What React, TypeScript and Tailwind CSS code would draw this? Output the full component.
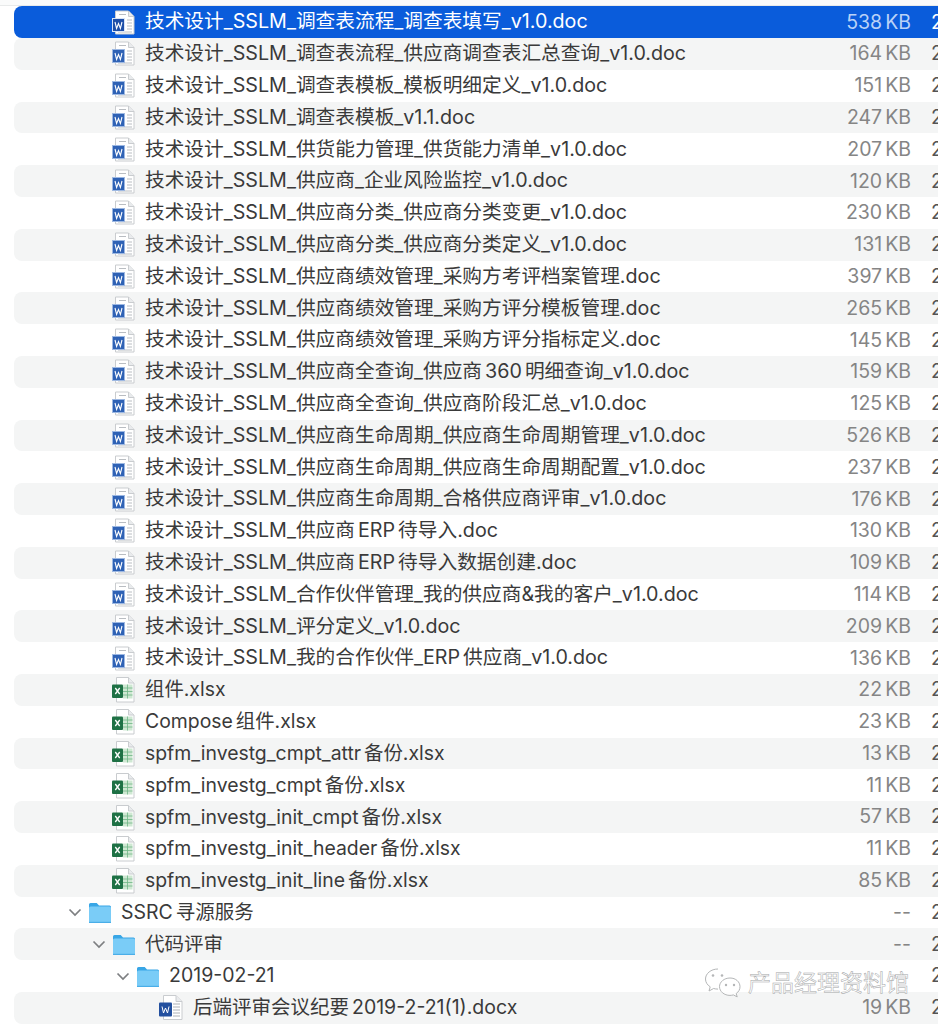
type Kind = "doc" | "xls";

type Row = { name: string; size: string; kind: Kind };

const docPrefix = "技术设计_SSLM_";

const files: Row[] = [
  { name: docPrefix + "调查表流程_调查表填写_v1.0.doc", size: "538 KB", kind: "doc" },
  { name: docPrefix + "调查表流程_供应商调查表汇总查询_v1.0.doc", size: "164 KB", kind: "doc" },
  { name: docPrefix + "调查表模板_模板明细定义_v1.0.doc", size: "151 KB", kind: "doc" },
  { name: docPrefix + "调查表模板_v1.1.doc", size: "247 KB", kind: "doc" },
  { name: docPrefix + "供货能力管理_供货能力清单_v1.0.doc", size: "207 KB", kind: "doc" },
  { name: docPrefix + "供应商_企业风险监控_v1.0.doc", size: "120 KB", kind: "doc" },
  { name: docPrefix + "供应商分类_供应商分类变更_v1.0.doc", size: "230 KB", kind: "doc" },
  { name: docPrefix + "供应商分类_供应商分类定义_v1.0.doc", size: "131 KB", kind: "doc" },
  { name: docPrefix + "供应商绩效管理_采购方考评档案管理.doc", size: "397 KB", kind: "doc" },
  { name: docPrefix + "供应商绩效管理_采购方评分模板管理.doc", size: "265 KB", kind: "doc" },
  { name: docPrefix + "供应商绩效管理_采购方评分指标定义.doc", size: "145 KB", kind: "doc" },
  { name: docPrefix + "供应商全查询_供应商 360 明细查询_v1.0.doc", size: "159 KB", kind: "doc" },
  { name: docPrefix + "供应商全查询_供应商阶段汇总_v1.0.doc", size: "125 KB", kind: "doc" },
  { name: docPrefix + "供应商生命周期_供应商生命周期管理_v1.0.doc", size: "526 KB", kind: "doc" },
  { name: docPrefix + "供应商生命周期_供应商生命周期配置_v1.0.doc", size: "237 KB", kind: "doc" },
  { name: docPrefix + "供应商生命周期_合格供应商评审_v1.0.doc", size: "176 KB", kind: "doc" },
  { name: docPrefix + "供应商 ERP 待导入.doc", size: "130 KB", kind: "doc" },
  { name: docPrefix + "供应商 ERP 待导入数据创建.doc", size: "109 KB", kind: "doc" },
  { name: docPrefix + "合作伙伴管理_我的供应商&我的客户_v1.0.doc", size: "114 KB", kind: "doc" },
  { name: docPrefix + "评分定义_v1.0.doc", size: "209 KB", kind: "doc" },
  { name: docPrefix + "我的合作伙伴_ERP 供应商_v1.0.doc", size: "136 KB", kind: "doc" },
  { name: "组件.xlsx", size: "22 KB", kind: "xls" },
  { name: "Compose 组件.xlsx", size: "23 KB", kind: "xls" },
  { name: "spfm_investg_cmpt_attr 备份.xlsx", size: "13 KB", kind: "xls" },
  { name: "spfm_investg_cmpt 备份.xlsx", size: "11 KB", kind: "xls" },
  { name: "spfm_investg_init_cmpt 备份.xlsx", size: "57 KB", kind: "xls" },
  { name: "spfm_investg_init_header 备份.xlsx", size: "11 KB", kind: "xls" },
  { name: "spfm_investg_init_line 备份.xlsx", size: "85 KB", kind: "xls" },
];

function DocIcon({ selected }: { selected?: boolean }) {
  return (
    <svg width="24" height="27" viewBox="0 0 24 27" className="shrink-0">
      <path d="M3.500 2h13l5.500 5.500v17.500h-18.500z" fill="#fff" stroke="#c9cccf" strokeWidth="1" />
      <path d="M16.500 2v5.500h5.500" fill="#e9ebed" stroke="#c9cccf" strokeWidth="1" />
      <path d="M7 5.500h7M15 11h5M15 14h5M15 17h5M15 20h5M6 23h14" stroke="#b9bdc2" strokeWidth="1" />
      <rect x="0" y="9" width="13" height="14" fill={selected ? "#d7e3f6" : "#9db8e2"} />
      <rect x="1" y="10" width="11" height="12" fill={selected ? "#1f4fa8" : "#2f62b5"} />
      <path d="M3 13l1.600 6.500 1.900-5 1.900 5 1.600-6.500" fill="none" stroke="#fff" strokeWidth="1.100" />
    </svg>
  );
}

function DocxIcon() {
  return (
    <svg width="24" height="27" viewBox="0 0 24 27" className="shrink-0">
      <path d="M4.500 1.500h12.500l6 6v18h-18.500z" fill="#fff" stroke="#c9cccf" strokeWidth="1" />
      <path d="M17 1.500v6h6" fill="#e9ebed" stroke="#c9cccf" strokeWidth="1" />
      <path d="M14 10h7M14 13h7M14 16h7M14 19h7M14 22h7" stroke="#aeb2b7" strokeWidth="1" />
      <rect x="0" y="8.500" width="13" height="14" rx="1" fill="#23509f" />
      <path d="M3 12.500l1.500 6.500 2-5 2 5 1.500-6.500" fill="none" stroke="#fff" strokeWidth="1" />
    </svg>
  );
}

function XlsIcon() {
  return (
    <svg width="24" height="27" viewBox="0 0 24 27" className="shrink-0">
      <path d="M4.500 1.500h12l5.500 5.500v19h-17.500z" fill="#fff" stroke="#c9cccf" strokeWidth="1" />
      <path d="M16.500 1.500v5.500h5.500" fill="#e9ebed" stroke="#c9cccf" strokeWidth="1" />
      <path d="M11 8.500h9.500v14h-9.500z" fill="#cfe8d3" />
      <path d="M11 12h9.500M11 15.500h9.500M11 19h9.500M15.500 8.500v14" stroke="#6fb585" strokeWidth="0.800" />
      <rect x="0" y="8.500" width="11" height="13.500" rx="1" fill="#1e7145" />
      <path d="M3.300 12l4.400 6M7.700 12l-4.400 6" stroke="#fff" strokeWidth="1.300" />
    </svg>
  );
}

function FolderIcon() {
  return (
    <svg width="24" height="23" viewBox="0 0 24 23" className="shrink-0">
      <path d="M1 3.500A1.500 1.500 0 0 1 2.500 2h6.200l2.300 2.400h10.500A1.500 1.500 0 0 1 23 6v4H1z" fill="#38a6e6" />
      <rect x="1" y="5.500" width="22" height="16.500" rx="1.600" fill="#7accf7" />
      <rect x="1" y="20.800" width="22" height="1.200" fill="#4aaee8" />
    </svg>
  );
}

function Chevron() {
  return (
    <svg width="14" height="9" viewBox="0 0 14 9" className="shrink-0">
      <path d="M1.500 1.500L7 7l5.500-5.500" fill="none" stroke="#7d7f81" strokeWidth="1.700" />
    </svg>
  );
}

function WeChatMark() {
  return (
    <svg width="38" height="33" viewBox="0 0 38 33" className="shrink-0">
      <path d="M14 2C7 2 1.500 6.500 1.500 12c0 3.200 1.800 6 4.700 7.800L5 24l4.600-2.500c1.400.4 2.800.6 4.400.6" fill="rgba(255,255,255,0.8)" stroke="#b4b6b7" strokeWidth="1" />
      <path d="M26 11c-5.800 0-10.500 3.900-10.500 8.700s4.700 8.700 10.500 8.700c1.200 0 2.300-.2 3.400-.5l3.800 2-1-3.400c2.400-1.600 3.800-4 3.800-6.800C36 14.900 31.800 11 26 11z" fill="rgba(255,255,255,0.8)" stroke="#b4b6b7" strokeWidth="1" />
      <circle cx="9" cy="8.500" r="1.300" fill="#b4b6b7" />
      <circle cx="18" cy="8.500" r="1.300" fill="#b4b6b7" />
      <circle cx="22" cy="18" r="1.200" fill="#b4b6b7" />
      <circle cx="30" cy="18" r="1.200" fill="#b4b6b7" />
    </svg>
  );
}

function rowBg(idx: number) {
  if (idx === 0) return "bg-[#0a5cdb] rounded-l-lg";
  return idx % 2 === 1 ? "bg-[#f4f5f5] rounded-l-lg" : "bg-white";
}

function DateStub({ selected }: { selected?: boolean }) {
  return <span className={`ml-[20px] w-[7px] overflow-hidden ${selected ? "text-white" : "text-[#555]"}`}>2</span>;
}

function SizeCell({ value, selected }: { value: string; selected?: boolean }) {
  return <span className={`w-[70px] text-right ${selected ? "text-[#b9d2f7]" : "text-[#858585]"}`}>{value}</span>;
}

function FileRow({ row, idx }: { row: Row; idx: number }) {
  const selected = idx === 0;
  return (
    <div className={`ml-[14px] flex h-[31.8px] items-center pl-[98px] whitespace-nowrap ${rowBg(idx)}`}>
      {row.kind === "doc" ? <DocIcon selected={selected} /> : <XlsIcon />}
      <span className={`ml-[9px] flex-1 ${row.kind === "doc" ? "text-[19.7px]" : "text-[19.4px]"} ${selected ? "text-white" : "text-[#3a3a3a]"}`}>
        {row.name}
      </span>
      <SizeCell value={row.size} selected={selected} />
      <DateStub selected={selected} />
    </div>
  );
}

function FolderRow({ name, idx, indent, size }: { name: string; idx: number; indent: string; size: string }) {
  return (
    <div className={`ml-[14px] flex h-[31.8px] items-center whitespace-nowrap ${indent} ${rowBg(idx)}`}>
      <Chevron />
      <span className="ml-[6px]">
        <FolderIcon />
      </span>
      <span className="ml-[9px] flex-1 text-[#3a3a3a]">{name}</span>
      <SizeCell value={size} />
      <DateStub />
    </div>
  );
}

export default function App() {
  return (
    <div className="relative h-[1024px] w-[938px] overflow-hidden bg-white font-['Inter','Noto_Sans_CJK_SC',sans-serif] text-[19.5px] [word-spacing:-2.5px]">
      <div className="h-[6.3px] border-b border-[#e8eaea] bg-[#fafbfb]" />
      {files.map((row, idx) => (
        <FileRow key={row.name} row={row} idx={idx} />
      ))}
      <FolderRow name="SSRC 寻源服务" idx={28} indent="pl-[54px]" size="--" />
      <FolderRow name="代码评审" idx={29} indent="pl-[78px]" size="--" />
      <FolderRow name="2019-02-21" idx={30} indent="pl-[102px]" size="" />
      <div className={`ml-[14px] flex h-[31.8px] items-center pl-[145px] whitespace-nowrap ${rowBg(31)}`}>
        <DocxIcon />
        <span className="ml-[10px] flex-1 text-[#3a3a3a]">后端评审会议纪要 2019-2-21(1).docx</span>
        <SizeCell value="19 KB" />
        <DateStub />
      </div>

      {/* 水印 */}
      <div className="absolute left-[704px] top-[966px] flex items-center gap-[6px] text-[23px] text-white/80 [-webkit-text-stroke:0.5px_#a4a6a7]">
        <WeChatMark />
        <span>产品经理资料馆</span>
      </div>
    </div>
  );
}
